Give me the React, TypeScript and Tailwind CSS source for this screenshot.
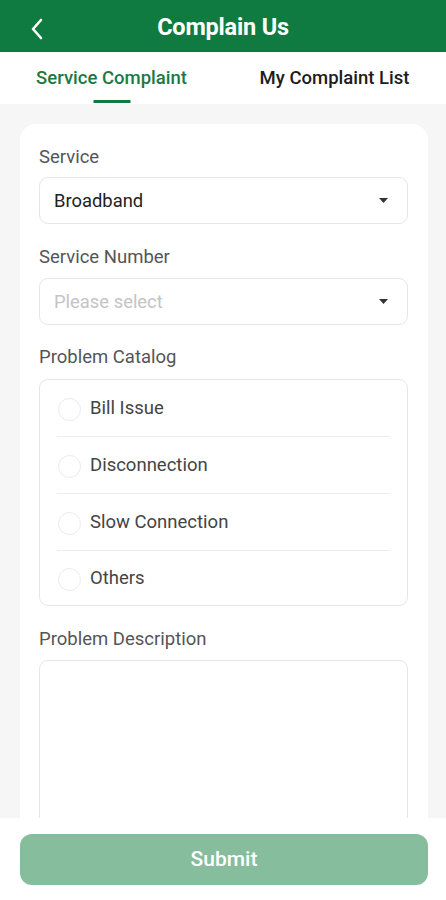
import React, { useState } from 'react';

const problems = ['Bill Issue', 'Disconnection', 'Slow Connection', 'Others'];

function Caret() {
  return (
    <svg width="9" height="5" viewBox="0 0 9 5" className="shrink-0">
      <path d="M0 0 L9 0 L4.5 5 Z" fill="#333" />
    </svg>
  );
}

function SelectBox({ value, placeholder }: { value?: string; placeholder: string }) {
  return (
    <div className="flex items-center justify-between h-[47px] rounded-[9px] border border-[#e6e6e6] bg-white pl-[14px] pr-[19px]">
      <span className={value ? 'text-[18.4px] text-[#222]' : 'text-[18.4px] text-[#c4c4c4]'}>{value ?? placeholder}</span>
      <Caret />
    </div>
  );
}

function Label({ children }: { children: React.ReactNode }) {
  return <div className="text-[18.5px] leading-[22px] text-[#555]">{children}</div>;
}

export default function App() {
  const [tab, setTab] = useState(0);
  const [picked, setPicked] = useState<string | null>(null);

  return (
    <div className="h-[900px] w-full flex flex-col bg-[#f6f6f6] overflow-hidden" style={{ fontFamily: 'Roboto, "Noto Sans", sans-serif' }}>
      {/* header */}
      <div className="h-[52px] shrink-0 bg-[#107b41] relative flex items-center justify-center pt-[3px]">
        <button className="absolute left-[26px] top-[14px] p-1">
          <svg width="14" height="22" viewBox="0 0 14 22">
            <path d="M11 2 L3 11 L11 20" fill="none" stroke="#fff" strokeWidth="2.6" strokeLinecap="round" strokeLinejoin="round" />
          </svg>
        </button>
        <h1 className="text-white text-[23.5px] font-bold tracking-[-0.2px]">Complain Us</h1>
      </div>

      {/* tabs */}
      <div className="h-[52px] shrink-0 bg-white flex">
        {['Service Complaint', 'My Complaint List'].map((t, i) => (
          <button key={t} onClick={() => setTab(i)} className="flex-1 relative flex items-center justify-center pt-[2px]">
            <span className={tab === i ? 'text-[18.5px] font-medium text-[#1a7a45]' : 'text-[18.5px] font-medium text-[#1c1c1c]'}>{t}</span>
            {tab === i && <span className="absolute bottom-[1px] left-1/2 -translate-x-1/2 w-[37px] h-[3px] bg-[#137a3f]" />}
          </button>
        ))}
      </div>

      {/* content */}
      <div className="flex-1 overflow-hidden pl-5 pr-[18px] pt-5">
        <div className="bg-white rounded-t-[16px] pt-[22px] pl-[19px] pr-[20px] pb-6 h-full">
          <Label>Service</Label>
          <div className="mt-[9px]">
            <SelectBox value="Broadband" placeholder="Please select" />
          </div>

          <div className="mt-[22px]">
            <Label>Service Number</Label>
          </div>
          <div className="mt-[10px]">
            <SelectBox placeholder="Please select" />
          </div>

          <div className="mt-[21px]">
            <Label>Problem Catalog</Label>
          </div>
          <div className="mt-[11px] rounded-[9px] border border-[#e6e6e6] px-[17px]">
            {problems.map((p, i) => (
              <button
                key={p}
                onClick={() => setPicked(p)}
                className={
                  i < problems.length - 1
                    ? 'w-full flex items-center gap-[9px] h-[57px] border-b border-[#ececec] pt-[2px]'
                    : 'w-full flex items-center gap-[9px] h-[54px] pt-[2px]'
                }
              >
                <span className="ml-[1px] w-[23px] h-[23px] rounded-full border border-[#ebebeb] flex items-center justify-center">
                  {picked === p && <span className="w-[13px] h-[13px] rounded-full bg-[#107b41]" />}
                </span>
                <span className="text-[18.5px] text-[#444]">{p}</span>
              </button>
            ))}
          </div>

          <div className="mt-[22px]">
            <Label>Problem Description</Label>
          </div>
          <textarea className="mt-[10px] w-full h-[200px] rounded-[9px] border border-[#e6e6e6] resize-none outline-none p-3 text-[16px]" />
        </div>
      </div>

      {/* bottom */}
      <div className="h-[82px] shrink-0 bg-white pl-5 pr-[18px] pt-4">
        <button className="w-full h-[51px] rounded-[12px] bg-[#85bd9d] text-white text-[21px] font-medium">Submit</button>
      </div>
    </div>
  );
}
